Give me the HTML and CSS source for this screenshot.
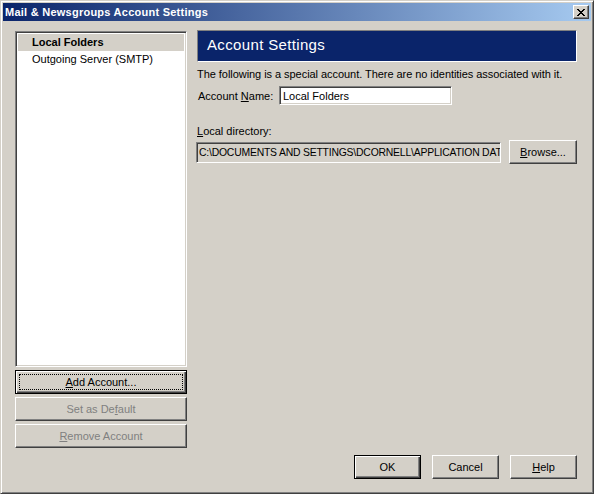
FILE: index.html
```html
<!DOCTYPE html>
<html>
<head>
<meta charset="utf-8">
<link rel="stylesheet" href="styles.css">
</head>
<body>
<div class="window">
  <div class="titlebar">
    <span class="title">Mail &amp; Newsgroups Account Settings</span>
    <span class="close"><svg width="8" height="7" viewBox="0 0 8 7"><path d="M0 0h2v1h1v1h2V1h1V0h2v1H7v1H6v1H5v1h1v1h1v1h1v1H6V6H5V5H3v1H2v1H0V6h1V5h1V4h1V3H2V2H1V1H0z" fill="#000"/></svg></span>
  </div>
  <div class="content">
    <div class="main">
      <div class="leftcol">
        <div class="list">
          <div class="item selected">Local Folders</div>
          <div class="item">Outgoing Server (SMTP)</div>
        </div>
        <div class="btn default wide"><span class="focus"><u>A</u>dd Account...</span></div>
        <div class="btn wide disabled">Set as De<u>f</u>ault</div>
        <div class="btn wide disabled"><u>R</u>emove Account</div>
      </div>
      <div class="rightcol">
        <div class="header">Account Settings</div>
        <div class="desc">The following is a special account. There are no identities associated with it.</div>
        <div class="namerow">
          <span class="label">Account <u>N</u>ame:</span>
          <span class="field namefield">Local Folders</span>
        </div>
        <div class="dirlabel"><u>L</u>ocal directory:</div>
        <div class="dirrow">
          <span class="field dirfield"><span class="dirtext">C:\DOCUMENTS AND SETTINGS\DCORNELL\APPLICATION DAT</span></span>
          <span class="btn browse"><u>B</u>rowse...</span>
        </div>
      </div>
    </div>
    <div class="bottom">
      <span class="btn default small">OK</span>
      <span class="btn small">Cancel</span>
      <span class="btn small"><u>H</u>elp</span>
    </div>
  </div>
</div>
</body>
</html>
```
FILE: styles.css
```css
* { box-sizing: border-box; }
html, body { margin: 0; padding: 0; background: #d4d0c8; }
body { font-family: "Liberation Sans", Arial, sans-serif; font-size: 11px; color: #000; }
u { text-decoration: underline; text-underline-offset: 1px; }

.window {
  width: 594px; height: 494px;
  border: 1px solid; border-color: #d4d0c8 #404040 #404040 #d4d0c8;
  box-shadow: inset 1px 1px #fff, inset -1px -1px #808080;
  padding: 2px;
  display: flex; flex-direction: column;
  background: #d4d0c8;
}
.titlebar {
  height: 18px; flex: none;
  background: linear-gradient(to right, #0a246a, #a6caf0);
  display: flex; align-items: center; justify-content: space-between;
  padding: 0 2px 0 2px;
}
.title { color: #fff; font-weight: bold; font-size: 11px; letter-spacing: 0.25px; }
.close {
  width: 16px; height: 14px;
  background: #d4d0c8;
  border: 1px solid; border-color: #fff #404040 #404040 #fff;
  box-shadow: inset -1px -1px #808080;
  display: flex; align-items: center; justify-content: center;
  padding-right: 1px;
}
.content {
  flex: 1; display: flex; flex-direction: column;
  padding: 10px 14px 12px 12px;
}
.main { flex: 1; display: flex; gap: 10px; }
.leftcol { width: 172px; display: flex; flex-direction: column; gap: 3px; padding-bottom: 7px; }
.list {
  flex: 1; background: #fff;
  border: 1px solid; border-color: #808080 #fff #fff #808080;
  box-shadow: inset 1px 1px #404040, inset -1px -1px #d4d0c8;
  padding: 2px 2px;
}
.item { height: 17px; line-height: 16px; padding-left: 14px; white-space: nowrap; }
.item.selected { background: #d4d0c8; font-weight: bold; }

.btn {
  display: flex; align-items: center; justify-content: center;
  background: #d4d0c8;
  border: 1px solid; border-color: #fff #404040 #404040 #fff;
  box-shadow: inset -1px -1px #808080;
  white-space: nowrap;
}
.btn.default {
  border-color: #000;
  box-shadow: inset 1px 1px #fff, inset -1px -1px #404040, inset -2px -2px #808080;
}
.btn.wide { height: 24px; }
.btn.disabled { color: #808080; }
.focus {
  flex: 1; align-self: stretch; margin: 3px;
  border: 1px dotted #000;
  display: flex; align-items: center; justify-content: center;
}

.rightcol { flex: 1; display: flex; flex-direction: column; }
.header {
  margin-top: -1px;
  height: 32px; flex: none;
  background: #0a246a; color: #fff;
  border: 1px solid; border-color: #808080 #fff #fff #808080;
  font-size: 15px; letter-spacing: 0.35px; line-height: 28px; padding-left: 9px;
}
.desc { margin-top: 5px; height: 14px; line-height: 14px; letter-spacing: -0.05px; }
.namerow { display: flex; align-items: center; margin-top: 5px; height: 19px; }
.label { width: 82px; padding-left: 1px; }
.field {
  background: #fff;
  border: 1px solid; border-color: #808080 #fff #fff #808080;
  box-shadow: inset 1px 1px #404040, inset -1px -1px #d4d0c8;
  padding: 0 3px; white-space: nowrap; overflow: hidden;
  display: flex; align-items: center;
}
.namefield { width: 173px; height: 19px; }
.dirlabel { margin-top: 19px; height: 14px; line-height: 14px; }
.dirrow { display: flex; align-items: center; gap: 8px; margin-top: 2px; margin-left: -1px; }
.dirfield { width: 305px; height: 21px; background: #d4d0c8; padding-left: 2px; }
.dirtext { font-size: 10.4px; letter-spacing: -0.2px; }
.browse { width: 68px; height: 24px; }

.bottom { display: flex; justify-content: flex-end; gap: 11px; height: 24px; flex: none; }
.btn.small { width: 67px; height: 24px; }
```
